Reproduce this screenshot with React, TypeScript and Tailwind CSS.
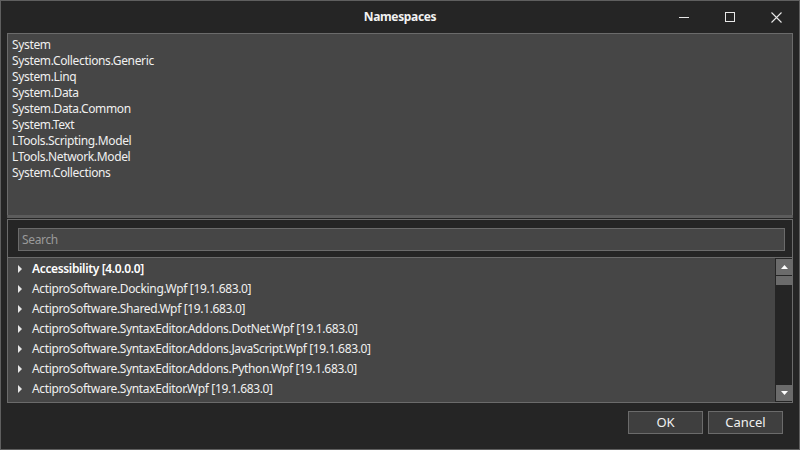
import { useState } from 'react'

const usings = [
    'System',
    'System.Collections.Generic',
    'System.Linq',
    'System.Data',
    'System.Data.Common',
    'System.Text',
    'LTools.Scripting.Model',
    'LTools.Network.Model',
    'System.Collections',
]

const assemblies = [
    { name: 'Accessibility [4.0.0.0]', bold: true },
    { name: 'ActiproSoftware.Docking.Wpf [19.1.683.0]' },
    { name: 'ActiproSoftware.Shared.Wpf [19.1.683.0]' },
    { name: 'ActiproSoftware.SyntaxEditor.Addons.DotNet.Wpf [19.1.683.0]' },
    { name: 'ActiproSoftware.SyntaxEditor.Addons.JavaScript.Wpf [19.1.683.0]' },
    { name: 'ActiproSoftware.SyntaxEditor.Addons.Python.Wpf [19.1.683.0]' },
    { name: 'ActiproSoftware.SyntaxEditor.Wpf [19.1.683.0]' },
]

const Arrow = () => (
    <svg width="5" height="8" viewBox="0 0 5 8" className="shrink-0">
        <path d="M0 0 L4 4 L0 8 Z" fill="#e6e6e6" />
    </svg>
)

const App = () => {
    const [search, setSearch] = useState('')

    return (
        <div
            className="w-[800px] h-[450px] bg-[#252525] border border-[#5f5f5f] flex flex-col text-[#f0f0f0] text-[12px] tracking-[-0.35px]"
            style={{ fontFamily: '"Noto Sans", "Open Sans", sans-serif' }}
        >
            {/* title bar */}
            <div className="h-[32px] grid grid-cols-[1fr_auto_1fr] items-center">
                <div />
                <div className="font-bold text-[12px] text-[#f2f2f2]">Namespaces</div>
                <div className="flex justify-end items-center h-full">
                    <div className="w-[46px] h-full flex items-center justify-center">
                        <svg width="11" height="11" viewBox="0 0 11 11">
                            <path d="M0 5.5 H10" stroke="#e8e8e8" strokeWidth="1" />
                        </svg>
                    </div>
                    <div className="w-[46px] h-full flex items-center justify-center">
                        <svg width="11" height="11" viewBox="0 0 11 11">
                            <rect x="0.5" y="0.5" width="9" height="9" fill="none" stroke="#e8e8e8" strokeWidth="1" />
                        </svg>
                    </div>
                    <div className="w-[46px] h-full flex items-center justify-center">
                        <svg width="11" height="11" viewBox="0 0 11 11">
                            <path d="M0.5 0.5 L10.5 10.5 M10.5 0.5 L0.5 10.5" stroke="#e8e8e8" strokeWidth="1.1" />
                        </svg>
                    </div>
                </div>
            </div>

            <div className="flex-1 flex flex-col px-[6px]">
                {/* usings editor */}
                <div className="h-[182px] bg-[#464646] border border-[#6b6b6b] border-b-0 px-[4px] pt-[3px] leading-[16px]">
                    {usings.map((u) => (
                        <div key={u}>{u}</div>
                    ))}
                </div>
                {/* splitter */}
                <div className="h-[3px] bg-[#5c5c5c]" />
                <div className="h-[1px]" />

                {/* references panel */}
                <div className="h-[184px] border border-[#6b6b6b] flex flex-col">
                    <div className="pl-[10px] pr-[7px] pt-[8px] pb-[6px]">
                        <input
                            value={search}
                            onChange={(e) => setSearch(e.target.value)}
                            placeholder="Search"
                            className="w-full h-[23px] bg-[#464646] border border-[#6b6b6b] px-[3px] text-[12px] text-[#f0f0f0] placeholder:text-[#9a9a9a] outline-none"
                        />
                    </div>
                    <div className="flex-1 flex border-t border-[#6b6b6b] bg-[#464646] min-h-0">
                        <div className="flex-1 flex flex-col pt-[1px]">
                            {assemblies.map((a) => (
                                <div key={a.name} className="h-[20px] flex items-center pl-[10px]">
                                    <Arrow />
                                    <span className={`ml-[9px] ${a.bold ? 'font-semibold text-white' : ''}`}>
                                        {a.name}
                                    </span>
                                </div>
                            ))}
                        </div>
                        {/* scrollbar */}
                        <div className="w-[17px] bg-[#252525] flex flex-col pl-[1px] pt-[1px] pb-[1px]">
                            <div className="h-[16px] bg-[#6b6b6b] flex items-center justify-center">
                                <svg width="7" height="4" viewBox="0 0 7 4">
                                    <path d="M0 4 L3.5 0 L7 4 Z" fill="#ffffff" />
                                </svg>
                            </div>
                            <div className="h-[9px] mt-[1px] bg-[#6b6b6b]" />
                            <div className="flex-1" />
                            <div className="h-[16px] bg-[#6b6b6b] flex items-center justify-center">
                                <svg width="7" height="4" viewBox="0 0 7 4">
                                    <path d="M0 0 L3.5 4 L7 0 Z" fill="#ffffff" />
                                </svg>
                            </div>
                        </div>
                    </div>
                </div>

                {/* buttons */}
                <div className="flex justify-end gap-[5px] pt-[8px] pr-[10px]">
                    <button className="w-[75px] h-[23px] bg-[#3f3f3f] border border-[#6b6b6b] text-[13px] tracking-normal text-[#f0f0f0]">
                        OK
                    </button>
                    <button className="w-[75px] h-[23px] bg-[#3f3f3f] border border-[#6b6b6b] text-[13px] tracking-normal text-[#f0f0f0]">
                        Cancel
                    </button>
                </div>
            </div>
        </div>
    )
}

export default App
